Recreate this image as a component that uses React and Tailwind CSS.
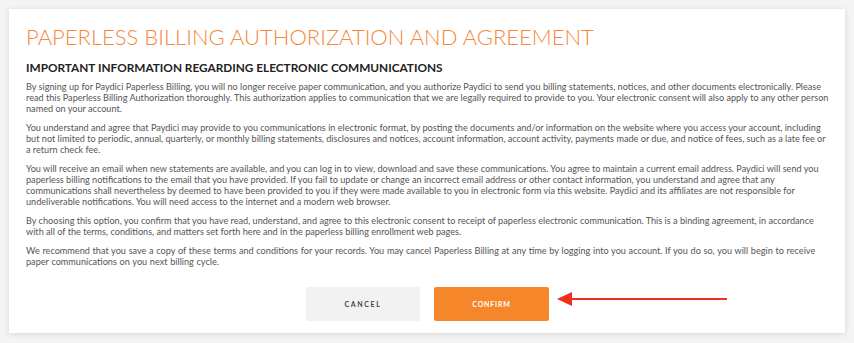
import React from "react";

const paragraphs = [
  "By signing up for Paydici Paperless Billing, you will no longer receive paper communication, and you authorize Paydici to send you billing statements, notices, and other documents electronically. Please read this Paperless Billing Authorization thoroughly. This authorization applies to communication that we are legally required to provide to you. Your electronic consent will also apply to any other person named on your account.",
  "You understand and agree that Paydici may provide to you communications in electronic format, by posting the documents and/or information on the website where you access your account, including but not limited to periodic, annual, quarterly, or monthly billing statements, disclosures and notices, account information, account activity, payments made or due, and notice of fees, such as a late fee or a return check fee.",
  "You will receive an email when new statements are available, and you can log in to view, download and save these communications. You agree to maintain a current email address. Paydici will send you paperless billing notifications to the email that you have provided. If you fail to update or change an incorrect email address or other contact information, you understand and agree that any communications shall nevertheless by deemed to have been provided to you if they were made available to you in electronic form via this website. Paydici and its affiliates are not responsible for undeliverable notifications. You will need access to the internet and a modern web browser.",
  "By choosing this option, you confirm that you have read, understand, and agree to this electronic consent to receipt of paperless electronic communication. This is a binding agreement, in accordance with all of the terms, conditions, and matters set forth here and in the paperless billing enrollment web pages.",
];

export default function App() {
  return (
    <div className="w-[854px] h-[343px] bg-[#f4f4f4] pt-[9px] px-[9px] font-['Lato',sans-serif]">
      <div className="relative h-[324px] bg-white shadow-[0_1px_6px_rgba(0,0,0,0.12)] pl-[17px] pr-[16px] pt-[15px]">
        <h1 className="text-[22px] leading-[26px] font-light text-[#f5883a]">
          PAPERLESS BILLING AUTHORIZATION AND AGREEMENT
        </h1>
        <h2 className="mt-[11px] text-[11.8px] leading-[14px] font-bold text-[#222]">
          IMPORTANT INFORMATION REGARDING ELECTRONIC COMMUNICATIONS
        </h2>
        <div className="mt-[6px] flex flex-col gap-[8px] text-[9.15px] leading-[11px] text-[#555]">
          {paragraphs.map((p, i) => (
            <p key={i}>{p}</p>
          ))}
          <p className="[word-spacing:0.35px]">
            We recommend that you save a copy of these terms and conditions for your records. You may cancel Paperless Billing at any time by logging into you account. If you do so, you will begin to receive paper communications on you next billing cycle.
          </p>
        </div>
        <div className="mt-[20px] flex justify-center gap-[14px]">
          <button className="w-[114px] h-[34px] rounded-[2px] bg-[#f2f2f2] text-[7px] font-bold tracking-[1.6px] text-[#444]">
            CANCEL
          </button>
          <button className="w-[115px] h-[34px] rounded-[2px] bg-[#f5862a] text-[7px] font-bold tracking-[0.8px] text-white">
            CONFIRM
          </button>
        </div>
        <svg
          className="absolute left-[548px] top-[282px]"
          width="172"
          height="16"
          viewBox="0 0 172 16"
        >
          <line x1="12" y1="8" x2="170" y2="8" stroke="#f0301c" strokeWidth="2" />
          <polygon points="0,8 15,1 15,15" fill="#f0301c" />
        </svg>
      </div>
    </div>
  );
}
